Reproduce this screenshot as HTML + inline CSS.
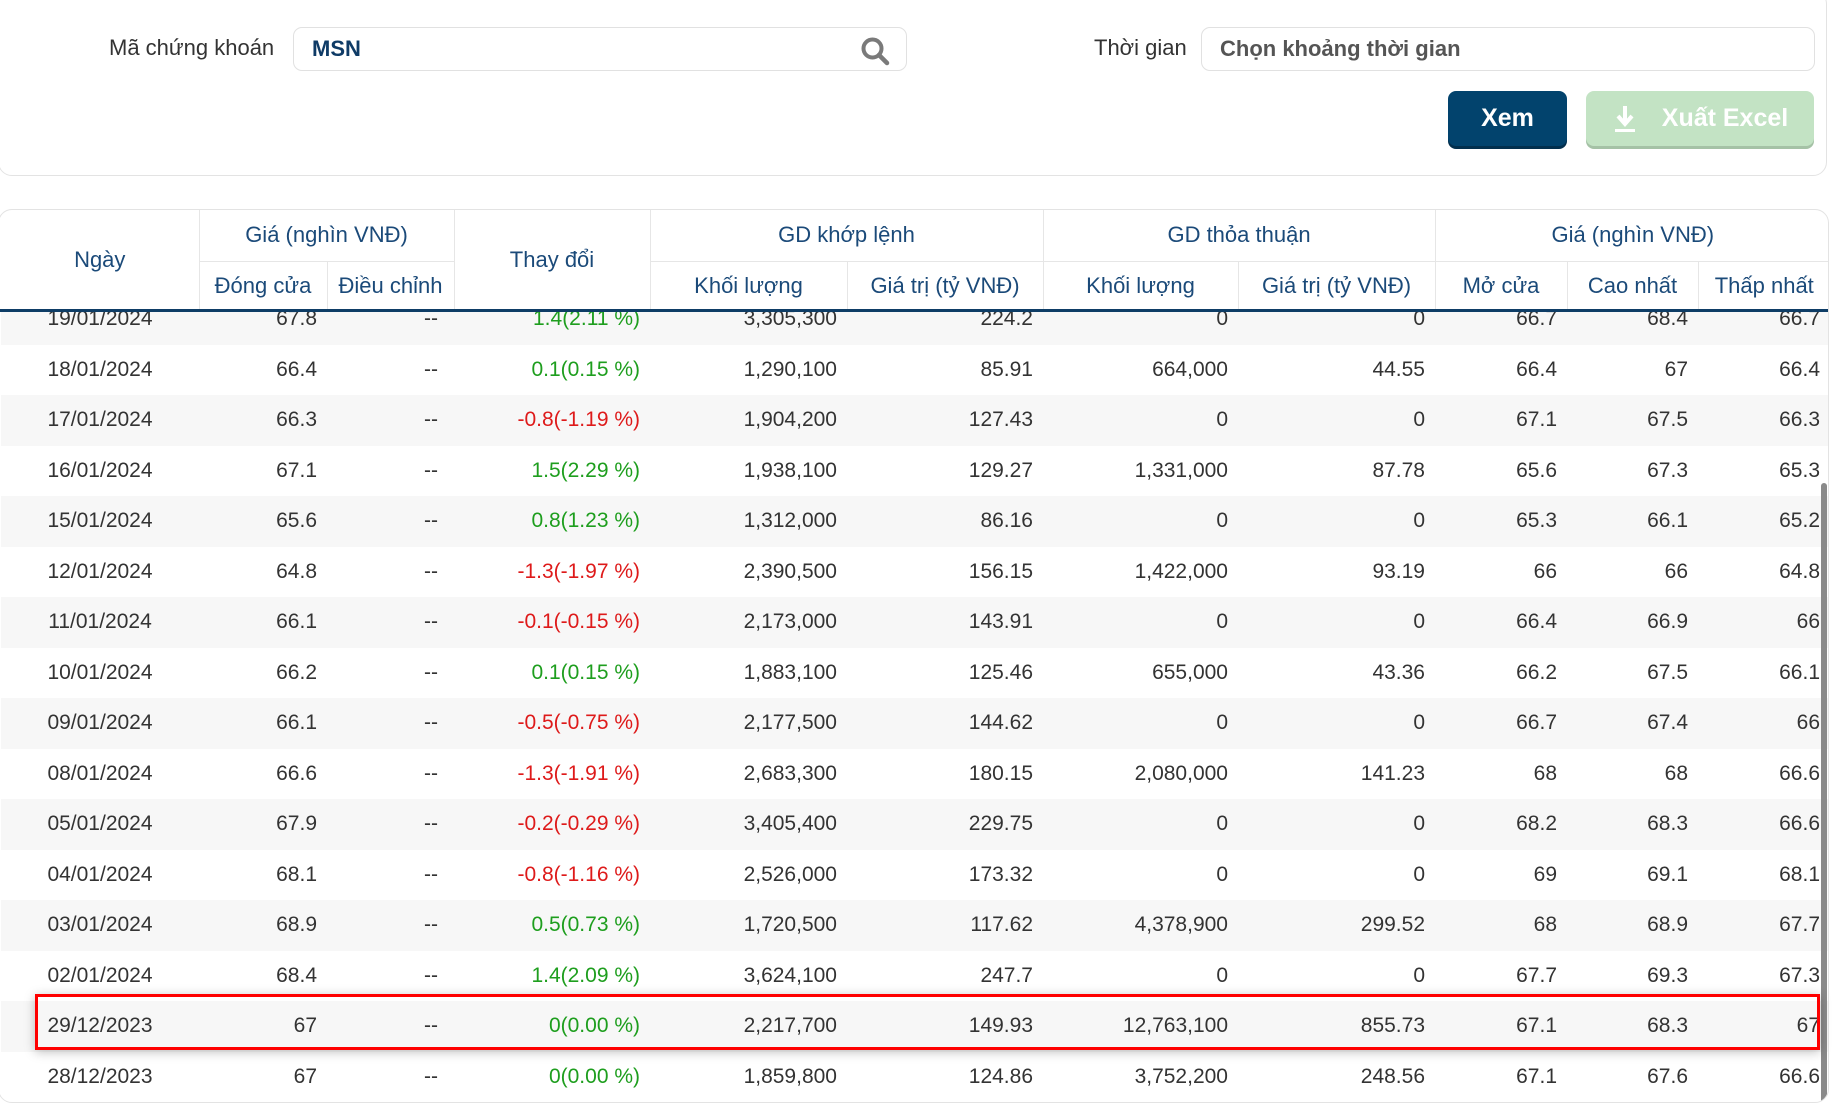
<!DOCTYPE html>
<html><head><meta charset="utf-8"><style>
*{box-sizing:border-box;margin:0;padding:0}
body{width:1841px;height:1113px;background:#fff;font-family:"Liberation Sans",sans-serif;position:relative;overflow:hidden;color:#333}
.card1{position:absolute;left:-2px;top:-10px;width:1829px;height:186px;border:1px solid #e3e3e3;border-radius:14px;background:#fff}
.lbl{position:absolute;font-size:22px;color:#333}
.inp{position:absolute;border:1px solid #e1e1e1;border-radius:9px;background:#fff;font-size:22px;padding-left:18px;display:flex;align-items:center}
.btn{position:absolute;border-radius:8px;color:#fff;font-weight:bold;font-size:25px;display:flex;align-items:center;justify-content:center}
.card2{position:absolute;left:-2px;top:209px;width:1831px;height:894px;border:1px solid #e3e3e3;border-radius:14px;background:#fff;overflow:hidden}
table{border-collapse:collapse;table-layout:fixed;position:absolute;left:2px}
th{color:#1b4a79;font-weight:normal;font-size:22px;border-right:1px solid #e6e6e6;border-bottom:1px solid #e6e6e6;text-align:center}
.body{position:absolute;left:0;top:101px;width:1829px;height:793px;overflow:hidden}
td{font-size:21px;height:50.5px;text-align:right;padding-right:10px;color:#333}
td:first-child{text-align:center;padding-right:0}
td.d{padding-right:16px}
tr:nth-child(odd) td{background:#f7f7f7}
.g{color:#1e9e1e}.r{color:#de1a1a}
</style></head><body>
<div class="card1"></div>
<div class="lbl" style="left:109px;top:35px">Mã chứng khoán</div>
<div class="inp" style="left:293px;top:27px;width:614px;height:44px;color:#0f3b66;font-weight:bold">MSN
<svg style="position:absolute;right:16px;top:8px" width="30" height="30" viewBox="0 0 30 30"><circle cx="12.5" cy="12.5" r="9" fill="none" stroke="#7a7a7a" stroke-width="4"/><line x1="19" y1="19" x2="27" y2="27" stroke="#7a7a7a" stroke-width="4.5" stroke-linecap="round"/></svg></div>
<div class="lbl" style="left:1094px;top:35px">Thời gian</div>
<div class="inp" style="left:1201px;top:27px;width:614px;height:44px;color:#555;font-weight:bold">Chọn khoảng thời gian</div>
<div class="btn" style="left:1448px;top:91px;width:119px;height:55px;background:#02436d;box-shadow:0 3px 0 #022f4d">Xem</div>
<div class="btn" style="left:1586px;top:91px;width:228px;height:55px;background:#c3e3c4;box-shadow:0 3px 0 #a5c2a6"><svg width="26" height="30" viewBox="0 0 26 30" style="margin-right:24px"><path d="M13 2v16M6 12l7 8 7-8" stroke="#fff" stroke-width="4" fill="none"/><rect x="3" y="25" width="20" height="3" fill="#fff"/></svg>Xuất Excel</div>
<div class="card2">
<table style="top:0;width:1829px">
<colgroup><col style="width:198px"><col style="width:128px"><col style="width:127px"><col style="width:196px"><col style="width:197px"><col style="width:196px"><col style="width:195px"><col style="width:197px"><col style="width:132px"><col style="width:131px"><col style="width:132px"></colgroup>
<tr style="height:51px"><th rowspan="2" style="border-bottom:none">Ngày</th><th colspan="2">Giá (nghìn VNĐ)</th><th rowspan="2" style="border-bottom:none">Thay đổi</th><th colspan="2">GD khớp lệnh</th><th colspan="2">GD thỏa thuận</th><th colspan="3" style="border-right:none">Giá (nghìn VNĐ)</th></tr>
<tr style="height:49px"><th style="border-bottom:none">Đóng cửa</th><th style="border-bottom:none">Điều chỉnh</th><th style="border-bottom:none">Khối lượng</th><th style="border-bottom:none">Giá trị (tỷ VNĐ)</th><th style="border-bottom:none">Khối lượng</th><th style="border-bottom:none">Giá trị (tỷ VNĐ)</th><th style="border-bottom:none">Mở cửa</th><th style="border-bottom:none">Cao nhất</th><th style="border:none">Thấp nhất</th></tr>
</table>
<div style="position:absolute;left:0;top:99px;width:1829px;height:3px;background:#0e3d66;z-index:2"></div>
<div class="body">
<table style="top:-17px;width:1829px">
<colgroup><col style="width:198px"><col style="width:128px"><col style="width:127px"><col style="width:196px"><col style="width:197px"><col style="width:196px"><col style="width:195px"><col style="width:197px"><col style="width:132px"><col style="width:131px"><col style="width:132px"></colgroup>
<tr><td>19/01/2024</td><td>67.8</td><td class="d">--</td><td class="g">1.4(2.11 %)</td><td>3,305,300</td><td>224.2</td><td>0</td><td>0</td><td>66.7</td><td>68.4</td><td>66.7</td></tr>
<tr><td>18/01/2024</td><td>66.4</td><td class="d">--</td><td class="g">0.1(0.15 %)</td><td>1,290,100</td><td>85.91</td><td>664,000</td><td>44.55</td><td>66.4</td><td>67</td><td>66.4</td></tr>
<tr><td>17/01/2024</td><td>66.3</td><td class="d">--</td><td class="r">-0.8(-1.19 %)</td><td>1,904,200</td><td>127.43</td><td>0</td><td>0</td><td>67.1</td><td>67.5</td><td>66.3</td></tr>
<tr><td>16/01/2024</td><td>67.1</td><td class="d">--</td><td class="g">1.5(2.29 %)</td><td>1,938,100</td><td>129.27</td><td>1,331,000</td><td>87.78</td><td>65.6</td><td>67.3</td><td>65.3</td></tr>
<tr><td>15/01/2024</td><td>65.6</td><td class="d">--</td><td class="g">0.8(1.23 %)</td><td>1,312,000</td><td>86.16</td><td>0</td><td>0</td><td>65.3</td><td>66.1</td><td>65.2</td></tr>
<tr><td>12/01/2024</td><td>64.8</td><td class="d">--</td><td class="r">-1.3(-1.97 %)</td><td>2,390,500</td><td>156.15</td><td>1,422,000</td><td>93.19</td><td>66</td><td>66</td><td>64.8</td></tr>
<tr><td>11/01/2024</td><td>66.1</td><td class="d">--</td><td class="r">-0.1(-0.15 %)</td><td>2,173,000</td><td>143.91</td><td>0</td><td>0</td><td>66.4</td><td>66.9</td><td>66</td></tr>
<tr><td>10/01/2024</td><td>66.2</td><td class="d">--</td><td class="g">0.1(0.15 %)</td><td>1,883,100</td><td>125.46</td><td>655,000</td><td>43.36</td><td>66.2</td><td>67.5</td><td>66.1</td></tr>
<tr><td>09/01/2024</td><td>66.1</td><td class="d">--</td><td class="r">-0.5(-0.75 %)</td><td>2,177,500</td><td>144.62</td><td>0</td><td>0</td><td>66.7</td><td>67.4</td><td>66</td></tr>
<tr><td>08/01/2024</td><td>66.6</td><td class="d">--</td><td class="r">-1.3(-1.91 %)</td><td>2,683,300</td><td>180.15</td><td>2,080,000</td><td>141.23</td><td>68</td><td>68</td><td>66.6</td></tr>
<tr><td>05/01/2024</td><td>67.9</td><td class="d">--</td><td class="r">-0.2(-0.29 %)</td><td>3,405,400</td><td>229.75</td><td>0</td><td>0</td><td>68.2</td><td>68.3</td><td>66.6</td></tr>
<tr><td>04/01/2024</td><td>68.1</td><td class="d">--</td><td class="r">-0.8(-1.16 %)</td><td>2,526,000</td><td>173.32</td><td>0</td><td>0</td><td>69</td><td>69.1</td><td>68.1</td></tr>
<tr><td>03/01/2024</td><td>68.9</td><td class="d">--</td><td class="g">0.5(0.73 %)</td><td>1,720,500</td><td>117.62</td><td>4,378,900</td><td>299.52</td><td>68</td><td>68.9</td><td>67.7</td></tr>
<tr><td>02/01/2024</td><td>68.4</td><td class="d">--</td><td class="g">1.4(2.09 %)</td><td>3,624,100</td><td>247.7</td><td>0</td><td>0</td><td>67.7</td><td>69.3</td><td>67.3</td></tr>
<tr><td>29/12/2023</td><td>67</td><td class="d">--</td><td class="g">0(0.00 %)</td><td>2,217,700</td><td>149.93</td><td>12,763,100</td><td>855.73</td><td>67.1</td><td>68.3</td><td>67</td></tr>
<tr><td>28/12/2023</td><td>67</td><td class="d">--</td><td class="g">0(0.00 %)</td><td>1,859,800</td><td>124.86</td><td>3,752,200</td><td>248.56</td><td>67.1</td><td>67.6</td><td>66.6</td></tr>
</table>
</div>
<div style="position:absolute;left:1822px;top:273px;width:6px;height:621px;background:#8a8a8a;border-radius:3px"></div>
</div>
<div style="position:absolute;left:35px;top:994px;width:1785px;height:56px;border:3px solid #f00;box-shadow:0 2px 10px rgba(0,0,0,.25)"></div>
</body></html>
